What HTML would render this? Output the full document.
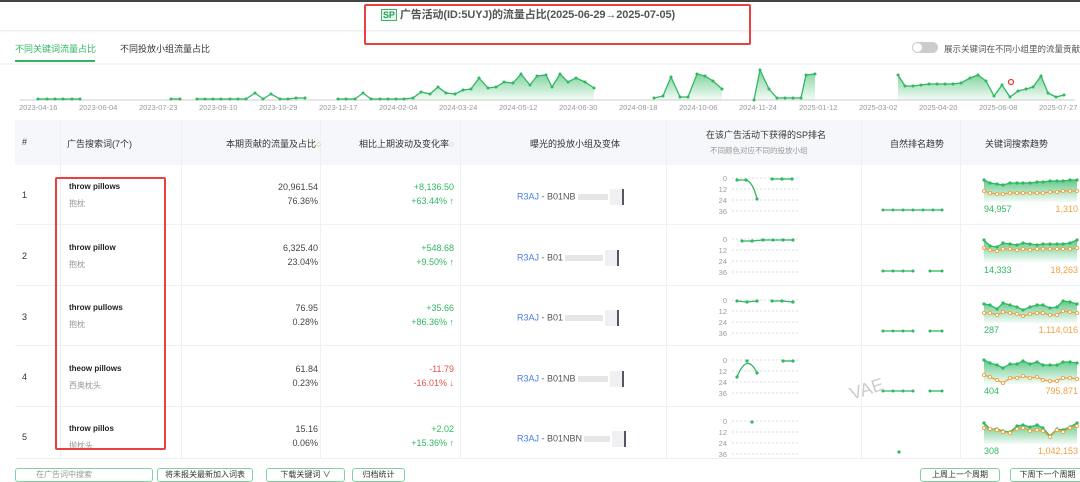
<!DOCTYPE html>
<html><head><meta charset="utf-8"><style>
*{margin:0;padding:0;box-sizing:border-box}
body{width:1080px;height:476px;overflow:hidden;background:#fff;font-family:"Liberation Sans","Noto Sans CJK SC",sans-serif;position:relative;color:#333}
.a{position:absolute}
.hd{font-size:9px;color:#333}
.vl{position:absolute;top:120px;height:338px;width:1px;background:#eef0f3}
.hl{position:absolute;left:15px;width:1065px;height:1px;background:#eef0f3}
.r{text-align:right;font-size:9px;line-height:14px}
.g{color:#2fb861}.red{color:#e8524f}
.kw{font-size:8px;font-weight:bold;color:#222}
.cn{font-size:8px;color:#999;margin-top:7px}
.btn{position:absolute;top:468px;height:14px;border:1px solid #7fd3a0;border-radius:3px;font-size:8px;color:#333;text-align:center;line-height:12px}
</style></head><body>
<div class="a" style="left:0;top:0;width:1080px;height:2px;background:#444"></div>
<div class="a" style="left:0;top:30px;width:1080px;height:3px;background:linear-gradient(#eee,#fff)"></div>
<div class="a" style="left:381px;top:6px;font-size:11px;font-weight:bold;color:#555;white-space:nowrap;letter-spacing:-0.1px"><span style="border:1px solid #3cb46e;background:#e6f6ec;color:#22a05a;font-size:9px;padding:0 1px;margin-right:3px">SP</span>广告活动(ID:5UYJ)的流量占比(2025-06-29→2025-07-05)</div>
<div class="a" style="left:364px;top:4px;width:387px;height:41px;border:2px solid #e94040;border-radius:2px"></div>
<div class="a" style="left:15px;top:42px;font-size:9px;color:#2fb861">不同关键词流量占比</div>
<div class="a" style="left:15px;top:60px;width:80px;height:2px;background:#2fb861"></div>
<div class="a" style="left:120px;top:42px;font-size:9px;color:#333">不同投放小组流量占比</div>
<div class="a" style="left:912px;top:42px;width:26px;height:11px;border-radius:6px;background:#ccc"><div style="position:absolute;left:1px;top:1px;width:9px;height:9px;border-radius:50%;background:#fff"></div></div>
<div class="a" style="left:944px;top:43px;font-size:8.5px;color:#555;white-space:nowrap">展示关键词在不同小组里的流量贡献</div>
<div class="a" style="left:0;top:63px;width:1080px;height:2px;background:#f4f5f7"></div>
<svg class="a" style="left:0;top:65px" width="1080" height="52">
<defs><linearGradient id="gg" x1="0" y1="0" x2="0" y2="1"><stop offset="0" stop-color="#2fb861" stop-opacity=".6"/><stop offset="1" stop-color="#2fb861" stop-opacity=".05"/></linearGradient>
<marker id="d" markerWidth="4" markerHeight="4" refX="2" refY="2" markerUnits="userSpaceOnUse"><circle cx="2" cy="2" r="1.5" fill="#2fb861"/></marker></defs>
<line x1="20" y1="35" x2="1075" y2="35" stroke="#ccc" stroke-width="1"/>
<g marker-start="url(#d)" marker-mid="url(#d)" marker-end="url(#d)">
<polyline fill="none" stroke="#2fb861" stroke-width="1.3" points="38,34 47,34 55,34 63,34 72,34 80,34"/>
<polyline fill="none" stroke="#2fb861" stroke-width="1.3" points="171,34 180,34"/>
<polyline fill="none" stroke="#2fb861" stroke-width="1.3" points="197,34 205,34 213,34 221,34 230,34 238,34 246,34 255,28 263,34 271,29 280,34 288,34 296,33 305,33"/>
<polyline fill="none" stroke="#2fb861" stroke-width="1.3" points="338,34 346,34 355,34 363,28 371,34 380,34 388,34 396,34 404,34 413,33 421,27 430,29 438,22 446,28 455,29 463,25 471,24 479,13 488,23 496,22 504,17 513,18 521,9 530,20 537,11 546,10 552,22 560,9 568,17 576,13 585,17 594,23"/>
</g>
<path d="M413,35 L413,33 421,27 430,29 438,22 446,28 455,29 463,25 471,24 479,13 488,23 496,22 504,17 513,18 521,9 530,20 537,11 546,10 552,22 560,9 568,17 576,13 585,17 594,23 L594,35Z" fill="url(#gg)"/>
<path d="M654,33 L663,31 671,12 680,32 688,32 697,9 705,11 713,16 722,24 L722,35 654,35Z" fill="url(#gg)"/>
<polyline fill="none" stroke="#2fb861" stroke-width="1.3" marker-start="url(#d)" marker-mid="url(#d)" marker-end="url(#d)" points="654,33 663,31 671,12 680,32 688,32 697,9 705,11 713,16 722,24"/>
<path d="M754,35 L760,5 769,24 777,33 785,33 793,33 801,33 806,10 815,9 L815,35Z" fill="url(#gg)"/>
<polyline fill="none" stroke="#2fb861" stroke-width="1.3" marker-start="url(#d)" marker-mid="url(#d)" marker-end="url(#d)" points="754,35 760,5 769,24 777,33 785,33 793,33 801,33 806,10 815,9"/>
<path d="M898,10 L905,21 913,21 921,20 929,19 937,19 945,19 953,19 961,18 970,13 978,10 986,16 994,31 1002,20 1010,32 1018,26 1026,24 1033,22 1041,11 1048,28 1056,32 1064,30 L1064,35 898,35Z" fill="url(#gg)"/>
<polyline fill="none" stroke="#2fb861" stroke-width="1.3" marker-start="url(#d)" marker-mid="url(#d)" marker-end="url(#d)" points="898,10 905,21 913,21 921,20 929,19 937,19 945,19 953,19 961,18 970,13 978,10 986,16 994,31 1002,20 1010,32 1018,26 1026,24 1033,22 1041,11 1048,28 1056,32 1064,30"/>
<circle cx="1011" cy="17" r="2.5" fill="#fff" stroke="#e33" stroke-width="1.2"/>
<g font-size="7.5" fill="#999" font-family="Liberation Sans">
<text x="19" y="45">2023-04-16</text><text x="79" y="45">2023-06-04</text><text x="139" y="45">2023-07-23</text><text x="199" y="45">2023-09-10</text><text x="259" y="45">2023-10-29</text><text x="319" y="45">2023-12-17</text><text x="379" y="45">2024-02-04</text><text x="439" y="45">2024-03-24</text><text x="499" y="45">2024-05-12</text><text x="559" y="45">2024-06-30</text><text x="619" y="45">2024-08-18</text><text x="679" y="45">2024-10-06</text><text x="739" y="45">2024-11-24</text><text x="799" y="45">2025-01-12</text><text x="859" y="45">2025-03-02</text><text x="919" y="45">2025-04-20</text><text x="979" y="45">2025-06-08</text><text x="1039" y="45">2025-07-27</text>
</g></svg>
<div class="a" style="left:15px;top:120px;width:1065px;height:45px;background:#f5f7fa"></div>
<div class="vl" style="left:60px"></div><div class="vl" style="left:181px"></div><div class="vl" style="left:320px"></div><div class="vl" style="left:460px"></div><div class="vl" style="left:666px"></div><div class="vl" style="left:861px"></div><div class="vl" style="left:960px"></div>
<div class="hl" style="top:224px"></div><div class="hl" style="top:285px"></div><div class="hl" style="top:345px"></div><div class="hl" style="top:406px"></div><div class="hl" style="top:458px"></div>
<div class="a hd" style="left:22px;top:137px">#</div>
<div class="a hd" style="left:67px;top:137px">广告搜索词(7个)</div>
<div class="a hd" style="left:226px;top:137px">本期贡献的流量及占比<span style="color:#f0a040">○</span></div>
<div class="a hd" style="left:359px;top:137px">相比上期波动及变化率<span style="color:#bbb">○</span></div>
<div class="a hd" style="left:530px;top:137px">曝光的投放小组及变体</div>
<div class="a hd" style="left:706px;top:128px">在该广告活动下获得的SP排名</div>
<div class="a" style="left:710px;top:145px;font-size:7.5px;color:#999">不同颜色对应不同的投放小组</div>
<div class="a hd" style="left:890px;top:137px">自然排名趋势</div>
<div class="a hd" style="left:985px;top:137px">关键词搜索趋势</div>

<div class="a hd" style="left:22px;top:190px">1</div>
<div class="a" style="left:69px;top:182px"><div class="kw">throw pillows</div><div class="cn">抱枕</div></div>
<div class="a r" style="left:200px;top:180px;width:118px;color:#444">20,961.54<br>76.36%</div>
<div class="a r g" style="left:340px;top:180px;width:114px">+8,136.50<br>+63.44% ↑</div>

<div class="a hd" style="left:22px;top:251px">2</div>
<div class="a" style="left:69px;top:243px"><div class="kw">throw pillow</div><div class="cn">抱枕</div></div>
<div class="a r" style="left:200px;top:241px;width:118px;color:#444">6,325.40<br>23.04%</div>
<div class="a r g" style="left:340px;top:241px;width:114px">+548.68<br>+9.50% ↑</div>

<div class="a hd" style="left:22px;top:312px">3</div>
<div class="a" style="left:69px;top:303px"><div class="kw">throw pullows</div><div class="cn">抱枕</div></div>
<div class="a r" style="left:200px;top:301px;width:118px;color:#444">76.95<br>0.28%</div>
<div class="a r g" style="left:340px;top:301px;width:114px">+35.66<br>+86.36% ↑</div>

<div class="a hd" style="left:22px;top:372px">4</div>
<div class="a" style="left:69px;top:364px"><div class="kw">theow pillows</div><div class="cn">西奥枕头</div></div>
<div class="a r" style="left:200px;top:362px;width:118px;color:#444">61.84<br>0.23%</div>
<div class="a r red" style="left:340px;top:362px;width:114px">-11.79<br>-16.01% ↓</div>

<div class="a hd" style="left:22px;top:432px">5</div>
<div class="a" style="left:69px;top:424px"><div class="kw">throw pillos</div><div class="cn">抛枕头</div></div>
<div class="a r" style="left:200px;top:422px;width:118px;color:#444">15.16<br>0.06%</div>
<div class="a r g" style="left:340px;top:422px;width:114px">+2.02<br>+15.36% ↑</div>

<div class="a" style="left:55px;top:177px;width:111px;height:273px;border:2px solid #e94040;border-radius:2px"></div>

<div class="a" style="left:517px;top:189px;font-size:9px;white-space:nowrap"><span style="color:#4a7ee8">R3AJ</span> <span style="color:#555">- B01NB</span><span style="display:inline-block;width:30px;height:6px;background:#e6e6e6;vertical-align:middle;margin-left:2px"></span><span style="display:inline-block;width:14px;height:16px;background:#f0f0f3;border-right:2px solid #556;vertical-align:middle;margin-left:2px"></span></div>
<div class="a" style="left:517px;top:250px;font-size:9px;white-space:nowrap"><span style="color:#4a7ee8">R3AJ</span> <span style="color:#555">- B01</span><span style="display:inline-block;width:38px;height:6px;background:#e6e6e6;vertical-align:middle;margin-left:2px"></span><span style="display:inline-block;width:14px;height:16px;background:#f0f0f3;border-right:2px solid #556;vertical-align:middle;margin-left:2px"></span></div>
<div class="a" style="left:517px;top:310px;font-size:9px;white-space:nowrap"><span style="color:#4a7ee8">R3AJ</span> <span style="color:#555">- B01</span><span style="display:inline-block;width:38px;height:6px;background:#e6e6e6;vertical-align:middle;margin-left:2px"></span><span style="display:inline-block;width:14px;height:16px;background:#f0f0f3;border-right:2px solid #556;vertical-align:middle;margin-left:2px"></span></div>
<div class="a" style="left:517px;top:371px;font-size:9px;white-space:nowrap"><span style="color:#4a7ee8">R3AJ</span> <span style="color:#555">- B01NB</span><span style="display:inline-block;width:30px;height:6px;background:#e6e6e6;vertical-align:middle;margin-left:2px"></span><span style="display:inline-block;width:14px;height:16px;background:#f0f0f3;border-right:2px solid #556;vertical-align:middle;margin-left:2px"></span></div>
<div class="a" style="left:517px;top:431px;font-size:9px;white-space:nowrap"><span style="color:#4a7ee8">R3AJ</span> <span style="color:#555">- B01NBN</span><span style="display:inline-block;width:26px;height:6px;background:#e6e6e6;vertical-align:middle;margin-left:2px"></span><span style="display:inline-block;width:14px;height:16px;background:#f0f0f3;border-right:2px solid #556;vertical-align:middle;margin-left:2px"></span></div>

<svg class="a" style="left:0;top:0" width="1080" height="476" font-family="Liberation Sans">
<defs><linearGradient id="tg" x1="0" y1="0" x2="0" y2="1"><stop offset="0" stop-color="#2fb861" stop-opacity=".75"/><stop offset="1" stop-color="#2fb861" stop-opacity=".05"/></linearGradient>
<marker id="gd" markerWidth="4" markerHeight="4" refX="2" refY="2" markerUnits="userSpaceOnUse"><circle cx="2" cy="2" r="1.6" fill="#2fb861"/></marker>
<marker id="od" markerWidth="5" markerHeight="5" refX="2.5" refY="2.5" markerUnits="userSpaceOnUse"><circle cx="2.5" cy="2.5" r="1.6" fill="#fff" stroke="#f0a040" stroke-width="0.9"/></marker></defs>
<g font-size="7.5" fill="#999" text-anchor="end">
<g transform="translate(0,165)"><text x="727" y="16">0</text><text x="727" y="27">12</text><text x="727" y="38">24</text><text x="727" y="49">36</text>
<g stroke="#ddd" stroke-dasharray="2,2"><line x1="732" y1="13" x2="798" y2="13"/><line x1="732" y1="24" x2="798" y2="24"/><line x1="732" y1="35" x2="798" y2="35"/><line x1="732" y1="46" x2="798" y2="46"/></g></g>
<g transform="translate(0,226)"><text x="727" y="16">0</text><text x="727" y="27">12</text><text x="727" y="38">24</text><text x="727" y="49">36</text>
<g stroke="#ddd" stroke-dasharray="2,2"><line x1="732" y1="13" x2="798" y2="13"/><line x1="732" y1="24" x2="798" y2="24"/><line x1="732" y1="35" x2="798" y2="35"/><line x1="732" y1="46" x2="798" y2="46"/></g></g>
<g transform="translate(0,287)"><text x="727" y="16">0</text><text x="727" y="27">12</text><text x="727" y="38">24</text><text x="727" y="49">36</text>
<g stroke="#ddd" stroke-dasharray="2,2"><line x1="732" y1="13" x2="798" y2="13"/><line x1="732" y1="24" x2="798" y2="24"/><line x1="732" y1="35" x2="798" y2="35"/><line x1="732" y1="46" x2="798" y2="46"/></g></g>
<g transform="translate(0,347)"><text x="727" y="16">0</text><text x="727" y="27">12</text><text x="727" y="38">24</text><text x="727" y="49">36</text>
<g stroke="#ddd" stroke-dasharray="2,2"><line x1="732" y1="13" x2="798" y2="13"/><line x1="732" y1="24" x2="798" y2="24"/><line x1="732" y1="35" x2="798" y2="35"/><line x1="732" y1="46" x2="798" y2="46"/></g></g>
<g transform="translate(0,408)"><text x="727" y="16">0</text><text x="727" y="27">12</text><text x="727" y="38">24</text><text x="727" y="49">36</text>
<g stroke="#ddd" stroke-dasharray="2,2"><line x1="732" y1="13" x2="798" y2="13"/><line x1="732" y1="24" x2="798" y2="24"/><line x1="732" y1="35" x2="798" y2="35"/><line x1="732" y1="46" x2="798" y2="46"/></g></g>
</g>
<g fill="none" stroke="#2fb861" stroke-width="1.3">
<path d="M737,180 L746,180 Q753,182 757,199"/><path d="M772,179 L782,179 792,179"/>
<path d="M742,241 L752,241 763,240 773,240 783,240 793,240"/>
<path d="M737,301 L747,302 757,301"/><path d="M772,301 L782,301 793,302"/>
<path d="M737,377 Q747,352 757,373"/><path d="M783,361 L793,361"/>
<path d="M883,210 L942,210"/><path d="M883,271 L913,271"/><path d="M930,271 L942,271"/>
<path d="M883,331 L913,331"/><path d="M930,331 L942,331"/>
<path d="M883,391 L913,391"/><path d="M930,391 L942,391"/>
</g>
<g fill="#2fb861">
<circle cx="737" cy="180" r="1.6"/><circle cx="746" cy="180" r="1.6"/><circle cx="757" cy="199" r="1.6"/><circle cx="772" cy="179" r="1.6"/><circle cx="782" cy="179" r="1.6"/><circle cx="792" cy="179" r="1.6"/>
<circle cx="742" cy="241" r="1.6"/><circle cx="752" cy="241" r="1.6"/><circle cx="763" cy="240" r="1.6"/><circle cx="773" cy="240" r="1.6"/><circle cx="783" cy="240" r="1.6"/><circle cx="793" cy="240" r="1.6"/>
<circle cx="737" cy="301" r="1.6"/><circle cx="747" cy="302" r="1.6"/><circle cx="757" cy="301" r="1.6"/><circle cx="772" cy="301" r="1.6"/><circle cx="782" cy="301" r="1.6"/><circle cx="793" cy="302" r="1.6"/>
<circle cx="737" cy="377" r="1.6"/><circle cx="747" cy="361" r="1.6"/><circle cx="757" cy="373" r="1.6"/><circle cx="783" cy="361" r="1.6"/><circle cx="793" cy="361" r="1.6"/>
<circle cx="752" cy="422" r="1.6"/><circle cx="899" cy="452" r="1.6"/>
<circle cx="883" cy="210" r="1.5"/><circle cx="893" cy="210" r="1.5"/><circle cx="903" cy="210" r="1.5"/><circle cx="913" cy="210" r="1.5"/><circle cx="923" cy="210" r="1.5"/><circle cx="933" cy="210" r="1.5"/><circle cx="942" cy="210" r="1.5"/>
<circle cx="883" cy="271" r="1.5"/><circle cx="893" cy="271" r="1.5"/><circle cx="903" cy="271" r="1.5"/><circle cx="913" cy="271" r="1.5"/><circle cx="930" cy="271" r="1.5"/><circle cx="942" cy="271" r="1.5"/>
<circle cx="883" cy="331" r="1.5"/><circle cx="893" cy="331" r="1.5"/><circle cx="903" cy="331" r="1.5"/><circle cx="913" cy="331" r="1.5"/><circle cx="930" cy="331" r="1.5"/><circle cx="942" cy="331" r="1.5"/>
<circle cx="883" cy="391" r="1.5"/><circle cx="893" cy="391" r="1.5"/><circle cx="903" cy="391" r="1.5"/><circle cx="913" cy="391" r="1.5"/><circle cx="930" cy="391" r="1.5"/><circle cx="942" cy="391" r="1.5"/>
</g>
<text x="852" y="400" font-size="18" fill="#ccc" transform="rotate(-18 852 400)">VAE</text>
<g stroke-width="1.3">
<path d="M984,180 L990,183 997,184 1003,185 1010,183 1017,183 1023,183 1030,183 1037,182 1043,182 1050,181 1057,181 1063,181 1070,180 1077,180 L1077,202 984,202Z" fill="url(#tg)"/>
<polyline fill="none" stroke="#2fb861" marker-start="url(#gd)" marker-mid="url(#gd)" marker-end="url(#gd)" points="984,180 990,183 997,184 1003,185 1010,183 1017,183 1023,183 1030,183 1037,182 1043,182 1050,181 1057,181 1063,181 1070,180 1077,180"/>
<polyline fill="none" stroke="#f0a040" marker-start="url(#od)" marker-mid="url(#od)" marker-end="url(#od)" points="984,191 990,193 997,194 1003,194 1010,193 1017,193 1023,193 1030,193 1037,193 1043,193 1050,192 1057,192 1063,191 1070,191 1077,191"/>
<path d="M984,240 L990,246 997,247 1003,243 1010,244 1017,245 1023,243 1030,244 1037,245 1043,244 1050,244 1057,244 1063,244 1070,243 1077,240 L1077,262 984,262Z" fill="url(#tg)"/>
<polyline fill="none" stroke="#2fb861" marker-start="url(#gd)" marker-mid="url(#gd)" marker-end="url(#gd)" points="984,240 990,246 997,247 1003,243 1010,244 1017,245 1023,243 1030,244 1037,245 1043,244 1050,244 1057,244 1063,244 1070,243 1077,240"/>
<polyline fill="none" stroke="#f0a040" marker-start="url(#od)" marker-mid="url(#od)" marker-end="url(#od)" points="984,248 990,250 997,251 1003,249 1010,249 1017,250 1023,249 1030,250 1037,249 1043,249 1050,249 1057,249 1063,249 1070,249 1077,248"/>
<path d="M984,304 L990,305 997,309 1003,303 1010,305 1017,307 1023,310 1030,307 1037,305 1043,305 1050,308 1057,307 1063,301 1070,302 1077,304 L1077,323 984,323Z" fill="url(#tg)"/>
<polyline fill="none" stroke="#2fb861" marker-start="url(#gd)" marker-mid="url(#gd)" marker-end="url(#gd)" points="984,304 990,305 997,309 1003,303 1010,305 1017,307 1023,310 1030,307 1037,305 1043,305 1050,308 1057,307 1063,301 1070,302 1077,304"/>
<polyline fill="none" stroke="#f0a040" marker-start="url(#od)" marker-mid="url(#od)" marker-end="url(#od)" points="984,313 990,313 997,315 1003,312 1010,313 1017,314 1023,316 1030,314 1037,313 1043,313 1050,315 1057,315 1063,311 1070,312 1077,313"/>
<path d="M984,360 L990,363 997,365 1003,368 1010,364 1017,364 1023,361 1030,364 1037,362 1043,365 1050,365 1057,365 1063,362 1070,362 1077,363 L1077,384 984,384Z" fill="url(#tg)"/>
<polyline fill="none" stroke="#2fb861" marker-start="url(#gd)" marker-mid="url(#gd)" marker-end="url(#gd)" points="984,360 990,363 997,365 1003,368 1010,364 1017,364 1023,361 1030,364 1037,362 1043,365 1050,365 1057,365 1063,362 1070,362 1077,363"/>
<polyline fill="none" stroke="#f0a040" marker-start="url(#od)" marker-mid="url(#od)" marker-end="url(#od)" points="984,375 990,377 997,380 1003,383 1010,378 1017,378 1023,376 1030,378 1037,377 1043,380 1050,381 1057,381 1063,378 1070,378 1077,379"/>
<path d="M984,423 L990,429 997,429 1003,431 1010,432 1017,426 1023,425 1030,427 1037,425 1043,428 1050,436 1057,429 1063,430 1070,427 1077,423 L1077,444 984,444Z" fill="url(#tg)"/>
<polyline fill="none" stroke="#2fb861" marker-start="url(#gd)" marker-mid="url(#gd)" marker-end="url(#gd)" points="984,423 990,429 997,429 1003,431 1010,432 1017,426 1023,425 1030,427 1037,425 1043,428 1050,436 1057,429 1063,430 1070,427 1077,423"/>
<polyline fill="none" stroke="#f0a040" marker-start="url(#od)" marker-mid="url(#od)" marker-end="url(#od)" points="984,428 990,429 997,430 1003,432 1010,433 1017,429 1023,428 1030,431 1037,430 1043,431 1050,437 1057,430 1063,432 1070,428 1077,426"/>
</g>
<g font-size="9"><text x="984" y="212" fill="#2fb861">94,957</text><text x="1078" y="212" fill="#f0a040" text-anchor="end">1,310</text>
<text x="984" y="273" fill="#2fb861">14,333</text><text x="1078" y="273" fill="#f0a040" text-anchor="end">18,263</text>
<text x="984" y="333" fill="#2fb861">287</text><text x="1078" y="333" fill="#f0a040" text-anchor="end">1,114,016</text>
<text x="984" y="394" fill="#2fb861">404</text><text x="1078" y="394" fill="#f0a040" text-anchor="end">795,871</text>
<text x="984" y="454" fill="#2fb861">308</text><text x="1078" y="454" fill="#f0a040" text-anchor="end">1,042,153</text></g>
</svg>
<div class="btn" style="left:15px;width:138px;text-align:left;padding-left:20px;color:#999">在广告词中搜索</div>
<div class="btn" style="left:157px;width:96px">将未报关最新加入词表</div>
<div class="btn" style="left:266px;width:79px">下载关键词 ∨</div>
<div class="btn" style="left:352px;width:53px">归档统计</div>
<div class="btn" style="left:920px;width:80px">上周上一个周期</div>
<div class="btn" style="left:1010px;width:75px">下周下一个周期</div>
</body></html>
